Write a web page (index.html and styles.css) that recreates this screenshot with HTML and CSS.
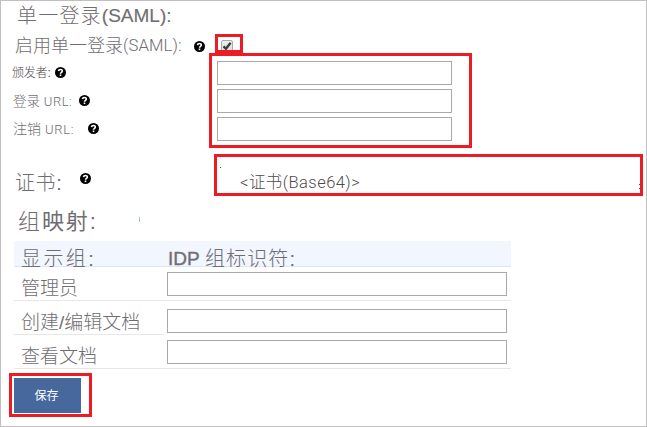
FILE: index.html
```html
<!DOCTYPE html>
<html lang="zh-CN">
<head>
<meta charset="utf-8">
<title>SAML</title>
<link rel="stylesheet" href="styles.css">
</head>
<body>
<svg width="0" height="0" class="defs"><defs><symbol id="help" viewBox="0 0 11 11"><circle cx="5.5" cy="5.5" r="5.5" fill="#000"/><path d="M3.5 4.1C3.7 2.1 7.4 2 7.3 4.1C7.2 5.3 5.6 5.3 5.5 6.7" fill="none" stroke="#fff" stroke-width="1.6"/><rect x="4.7" y="7.5" width="1.6" height="1.6" fill="#fff"/></symbol></defs></svg>
<main class="page">
  <h1 class="title"><span class="t1">单一登录</span><span class="t1-latin">(SAML):</span></h1>
  <section class="settings">
    <div class="row enable">
      <label class="label"><span class="e1">启用单一登录</span><span class="e1-latin">(SAML):</span></label>
      <svg class="help help-enable"><use href="#help"/></svg>
      <div class="control check-control"><span class="check"><svg width="10" height="10" viewBox="0 0 10 10"><path d="M1.5 5.4L4 7.8L8.6 1.8" fill="none" stroke="#3c3c3c" stroke-width="2.3"/></svg></span></div>
    </div>
    <div class="row">
      <label class="label issuer">颁发者:</label>
      <svg class="help help-issuer"><use href="#help"/></svg>
      <div class="control"><input class="field" type="text"></div>
    </div>
    <div class="row">
      <label class="label url"><span class="login-cjk">登录</span> URL:</label>
      <svg class="help help-login"><use href="#help"/></svg>
      <div class="control"><input class="field" type="text"></div>
    </div>
    <div class="row">
      <label class="label url logout"><span class="logout-cjk">注销</span> URL:</label>
      <svg class="help help-logout"><use href="#help"/></svg>
      <div class="control"><input class="field" type="text"></div>
    </div>
    <div class="row cert">
      <label class="label cert-label">证书:</label>
      <svg class="help help-cert"><use href="#help"/></svg>
      <div class="control cert-value">&lt;证书(Base64)&gt;</div>
    </div>
  </section>
  <h2 class="group-title"><span>组<b>映射</b>:</span><i class="caret"></i></h2>
  <section class="groups">
    <div class="group head"><span class="name">显示组:</span><span class="idp"><span class="idp-latin">IDP</span><span class="idp-cjk">组标识符:</span></span></div>
    <div class="group"><label class="name">管理员</label><input class="field" type="text"></div>
    <div class="group partial"><label class="name">创建/编辑文档</label><input class="field" type="text"></div>
    <div class="group last"><label class="name">查看文档</label><input class="field" type="text"></div>
  </section>
  <button class="save">保存</button>
  <div class="mark mark-check"></div>
  <div class="mark mark-fields"></div>
  <div class="mark mark-cert"><i class="speck"></i><i class="grip"></i></div>
  <div class="mark mark-save"></div>
</main>
</body>
</html>
```
FILE: styles.css
```css
* { box-sizing: border-box; }
body { margin: 0; background: #fff; overflow: hidden; font-family: "Liberation Sans", "Noto Sans CJK SC", sans-serif; font-weight: 300; color: #706d72; }
.defs { position: absolute; }
.page { position: relative; width: 647px; height: 427px; border: 1px solid #c0c0c0; padding-left: 11px; }
h1, h2 { margin: 0; font-weight: 300; white-space: nowrap; }
.title { display: flex; align-items: center; height: 30px; padding-left: 5px; line-height: 28px; }
.t1 { font-size: 20px; letter-spacing: 1.2px; }
.t1-latin { font-size: 19px; -webkit-text-stroke: 0.15px #777479; }
.row { display: flex; align-items: center; height: 28px; position: relative; }
.label { white-space: nowrap; line-height: 24px; }
.enable .label { width: 170px; margin-left: 3px; padding-top: 2px; display: flex; align-items: center; }
.enable .help { margin-top: 2px; }
.e1 { font-size: 18px; }
.e1-latin, .url, .cert-value { font-family: Roboto, "Noto Sans CJK SC", sans-serif; }
.e1-latin { font-size: 16.7px; letter-spacing: 0.1px; }
.issuer { font-size: 12px; width: 39px; margin-left: 0; letter-spacing: -0.2px; color: #4c494e; }
.url { font-size: 13px; letter-spacing: 0.5px; margin-left: 1px; width: 62px; }
.logout { letter-spacing: 0.7px; }
.login-cjk { font-size: 13.5px; letter-spacing: 0.1px; }
.logout-cjk { font-size: 14px; letter-spacing: 0.1px; }
.help { width: 11px; height: 11px; flex: none; }
.help-enable { margin-left: 9px; }
.help-issuer { margin: 0 0 2px 4px; }
.help-login { margin: 0 0 1px 4px; }
.help-logout { margin: 0 0 1px 13px; }
.control { margin-left: auto; width: 429px; display: flex; align-items: center; }
.check-control { padding-left: 4px; padding-top: 2px; }
.check { width: 12px; height: 12px; border: 1px solid #aaa; border-radius: 2px; background: linear-gradient(#eee, #dcdcdc); display: flex; }
.field { display: block; width: 235px; height: 24px; border: 1px solid #a9a9a9; margin: 0; padding: 2px; background: #fff; outline: none; }
.cert { height: 54px; margin-top: 10px; }
.cert-label { font-size: 20px; letter-spacing: 0.6px; width: 49px; margin-left: 3px; padding-top: 6px; }
.help-cert { margin: 0 0 3px 16px; }
.cert-value { padding-left: 23px; padding-top: 2px; font-size: 16.5px; letter-spacing: 0.45px; color: #4f4b51; white-space: nowrap; }
.group-title { height: 31px; display: flex; align-items: center; padding-left: 6px; font-size: 22px; letter-spacing: 1.9px; line-height: 28px; }
.group-title span { margin-top: -1px; }
.caret { width: 1px; height: 5px; background: #8fc7e8; margin: 0 0 7px 41px; }
.groups { width: 497px; margin-left: 2px; margin-top: 3px; }
.group { display: flex; height: 34px; border-bottom: 1px solid #e7e7e7; }
.name { width: 153px; padding-left: 7px; font-size: 19px; line-height: 43px; white-space: nowrap; flex: none; }
.group .field { width: 340px; margin-top: 5px; }
.head { height: 26px; background: #f1f6ff; border-color: #dfe5f3; }
.head .name { font-size: 20px; letter-spacing: 2.4px; line-height: 37px; }
.idp { display: flex; line-height: 37px; white-space: nowrap; }
.idp-latin { font-size: 19px; line-height: 35px; width: 38px; padding-left: 1px; -webkit-text-stroke: 0.4px #777479; }
.idp-cjk { font-size: 20px; letter-spacing: 1.1px; }
.partial { border-bottom-color: transparent; background: linear-gradient(#e7e7e7, #e7e7e7) 0 100% / 150px 1px no-repeat border-box; }
.partial .name, .last .name { line-height: 43px; }
.partial .field { margin-top: 8px; }
.save { display: block; width: 67px; height: 35px; margin: 9px 0 0 2px; padding: 0 2px 2px 0; border: 0; background: #46689c; color: #fff; font: 400 12px "Noto Sans CJK SC", sans-serif; }
.mark { position: absolute; border: 3px solid #ed1c24; pointer-events: none; }
.mark-check { left: 214px; top: 33px; width: 28px; height: 19px; }
.mark-fields { left: 208px; top: 52px; width: 263px; height: 95px; }
.mark-cert { left: 213px; top: 153px; width: 429px; height: 42px; }
.mark-save { left: 8px; top: 372px; width: 83px; height: 44px; }
.speck { position: absolute; left: 3px; top: 10px; width: 1px; height: 1px; background: #a33a10; }
.grip { position: absolute; right: 0; bottom: 4px; width: 1px; height: 5px; border-top: 1px solid #555; border-bottom: 1px solid #555; }
```
